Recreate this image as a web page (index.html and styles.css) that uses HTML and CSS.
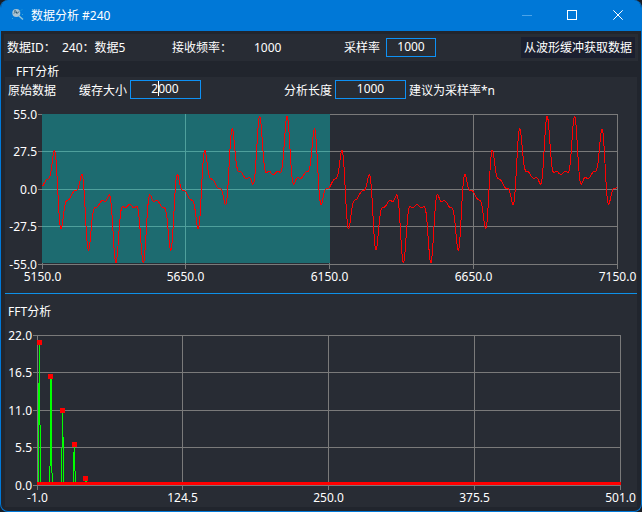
FILE: index.html
```html
<!DOCTYPE html>
<html lang="zh-CN">
<head>
<meta charset="utf-8">
<title>数据分析 #240</title>
<link rel="stylesheet" href="styles.css">
</head>
<body>
<main class="window">
  <header class="titlebar">
    <svg class="app-icon" width="16" height="16" viewBox="0 0 16 16">
      <circle cx="5.3" cy="5" r="4" fill="#a9c3d2"/>
      <path d="M3 5.5l2-2 1 2 2-2M3 3.4l1.6-1" fill="none" stroke="#28556e"/>
      <path d="M8 8l4 3.5" stroke="#8cc4dc" stroke-width="1.6"/>
      <path d="M10 2.5l1-1M11 7l1-1M1 11l1-1" stroke="#35a9d8"/>
    </svg>
    <span class="title">数据分析 #240</span>
    <svg class="controls" width="119" height="31" viewBox="0 0 119 31" fill="none">
      <path class="dim" d="M0 15.5h10"/>
      <rect x="45.5" y="10.5" width="9" height="9"/>
      <path d="M91.3 10.3l9.4 9.4M100.7 10.3l-9.4 9.4"/>
    </svg>
  </header>
  <section class="info">
    <span class="source-label">数据ID：</span>
    <span class="source">240：数据5</span>
    <span class="rate-label">接收频率：</span>
    <span class="rate">1000</span>
    <span class="sample-label">采样率</span>
    <span class="field small">1000</span>
    <button class="fetch">从波形缓冲获取数据</button>
  </section>
  <div class="group-title">FFT分析</div>
  <section class="group">
    <div class="settings">
      <span class="raw-label">原始数据</span>
      <span class="cache-label">缓存大小</span>
      <span class="field caret">2000</span>
      <span class="length-label">分析长度</span>
      <span class="field">1000</span>
      <span class="hint">建议为采样率*n</span>
    </div>
    <svg class="chart wave" id="wave" width="632" height="189" viewBox="5 104 632 189"></svg>
    <div class="fft-title">FFT分析</div>
    <svg class="chart" id="fft" width="632" height="182" viewBox="5 325 632 182"></svg>
  </section>
</main>
<script src="charts.js"></script>
</body>
</html>
```
FILE: styles.css
```css
* { box-sizing: border-box; }
body {
  margin: 0;
  background: #1b1e25;
  font: 12px/16px "Noto Sans", "Noto Sans CJK SC", sans-serif;
  color: #fff;
}
.window {
  width: 642px;
  height: 512px;
  border: 1px solid #0078d7;
  border-top: 0;
  border-radius: 8px;
  overflow: hidden;
  background: #21252d;
}
.titlebar {
  height: 31px;
  display: flex;
  align-items: center;
  padding-left: 10px;
  background: #0078d7;
}
.app-icon { margin-right: 4px; }
.controls { margin-left: auto; stroke: #fff; }
.controls .dim { stroke: #4ba3e8; }
.info {
  display: flex;
  align-items: center;
  height: 27px;
  margin: 3px 3px 0;
  padding: 0 3px;
  background: #282c34;
  white-space: nowrap;
}
.source-label { width: 55px; }
.source { width: 110px; }
.rate-label { width: 82px; }
.rate { width: 90px; }
.sample-label { width: 42px; }
.field {
  flex: none;
  width: 71px;
  height: 19px;
  border: 1px solid #0e91f5;
  text-align: center;
  line-height: 16px;
}
.small { width: 50px; }
.fetch {
  margin-left: auto;
  width: 114px;
  height: 21px;
  padding: 0;
  border: 0;
  background: #1b1f2f;
  color: inherit;
  font: inherit;
  white-space: nowrap;
}
.group-title {
  height: 16px;
  padding: 3px 0 0 15px;
  line-height: 16px;
}
.group {
  margin: 0 4px;
  height: 430px;
  background: #282c34;
}
.settings {
  display: flex;
  align-items: center;
  height: 27px;
  padding: 0 3px;
  white-space: nowrap;
}
.settings .field { margin-bottom: 2px; }
.raw-label { width: 71px; }
.cache-label { width: 51px; }
.length-label { margin-left: 83px; width: 51px; }
.hint { margin-left: 3px; }
.field.caret {
  padding-right: 1px;
  background: linear-gradient(#fff, #fff) 27px 0 / 1px 15px no-repeat;
}
.chart { display: block; }
.wave { border-bottom: 1px solid #0e91e8; height: 190px; }
.fft-title { height: 31px; padding: 10px 3px 0; }
.chart text { font: 12px "Noto Sans", sans-serif; fill: #fff; }
.grid { stroke: #7a7a7a; fill: none; shape-rendering: crispEdges; }
.grid-selected { stroke: #4fa09c; fill: none; shape-rendering: crispEdges; }
.selection { fill: #1d6b70; }
.signal { stroke: #f00; fill: none; shape-rendering: crispEdges; }
.spectrum { stroke: #0f0; fill: none; shape-rendering: crispEdges; }
.peak { fill: #f00; }
```
FILE: charts.js
```js
const NS = "http://www.w3.org/2000/svg";
function add(parent, tag, attrs, text) {
  const el = document.createElementNS(NS, tag);
  for (const key in attrs) el.setAttribute(key, attrs[key]);
  if (text) el.textContent = text;
  parent.appendChild(el);
}
function grid(svg, xs, ys) {
  const x0 = xs[0], x1 = xs[xs.length - 1], y0 = ys[0], y1 = ys[ys.length - 1];
  const d = ys.map(y => `M${x0 - 4} ${y}.5H${x1 + 1}`).concat(xs.map(x => `M${x}.5 ${y0}V${y1 + 5}`));
  add(svg, "path", { class: "grid", d: d.join("") });
}
function labels(svg, xs, ys, xText, yText) {
  ys.forEach((y, i) => add(svg, "text", { x: xs[0] - 5, y: y + 5, "text-anchor": "end" }, yText[i]));
  xs.forEach((x, i) => add(svg, "text", { x: x + 0.5, y: ys[4] + 17, "text-anchor": "middle" }, xText[i]));
}

const amps = [[1, 21], [11, 16], [21, 11], [31, 6], [41, 1]];
const wave = document.getElementById("wave");
const wx = [42, 185, 329, 473, 617], wy = [114, 151, 189, 226, 264];
grid(wave, wx, wy);
add(wave, "rect", { class: "selection", x: 42, y: 114, width: 288, height: 149 });
add(wave, "path", { class: "grid-selected", d: "M42 151.5H330M42 189.5H330M42 226.5H330M185.5 114V263" });
labels(wave, wx, wy, ["5150.0", "5650.0", "6150.0", "6650.0", "7150.0"], ["55.0", "27.5", "0.0", "-27.5", "-55.0"]);
const points = [];
for (let n = 0; n < 2000; n++) {
  const t = n / 1000 + 0.447;
  const v = amps.reduce((sum, [f, a]) => sum + a * Math.sin(2 * Math.PI * f * t), 0);
  points.push(`${(42.5 + n * 0.2875).toFixed(2)} ${(189.5 - v * 75 / 55).toFixed(2)}`);
}
add(wave, "path", { class: "signal", d: "M" + points.join("L") });

const fft = document.getElementById("fft");
const fx = [37, 182, 328, 474, 620], fy = [335, 372, 410, 447, 485];
grid(fft, fx, fy);
labels(fft, fx, fy, ["-1.0", "124.5", "250.0", "375.5", "501.0"], ["22.0", "16.5", "11.0", "5.5", "0.0"]);
// Each stroke is [x, top, bottom].
const strokes = [
  [38, 383, 484], [39, 342, 425], [40, 425, 484],
  [49, 466, 484], [50, 376, 466], [51, 378, 473], [52, 473, 484],
  [61, 448, 484], [62, 410, 448], [63, 437, 484],
  [73, 452, 484], [74, 444, 471], [75, 471, 484],
  [85, 478, 484], [86, 481, 484]
];
add(fft, "path", { class: "spectrum", d: strokes.map(([x, a, b]) => `M${x}.5 ${a}V${b}`).join("") });
[[39, 342], [50, 376], [62, 410], [74, 444], [85, 478]].forEach(([x, y]) => {
  add(fft, "rect", { class: "peak", x: x - 2, y: y - 2, width: 5, height: 5 });
});
add(fft, "rect", { class: "peak", x: 37, y: 482, width: 584, height: 3 });
```
